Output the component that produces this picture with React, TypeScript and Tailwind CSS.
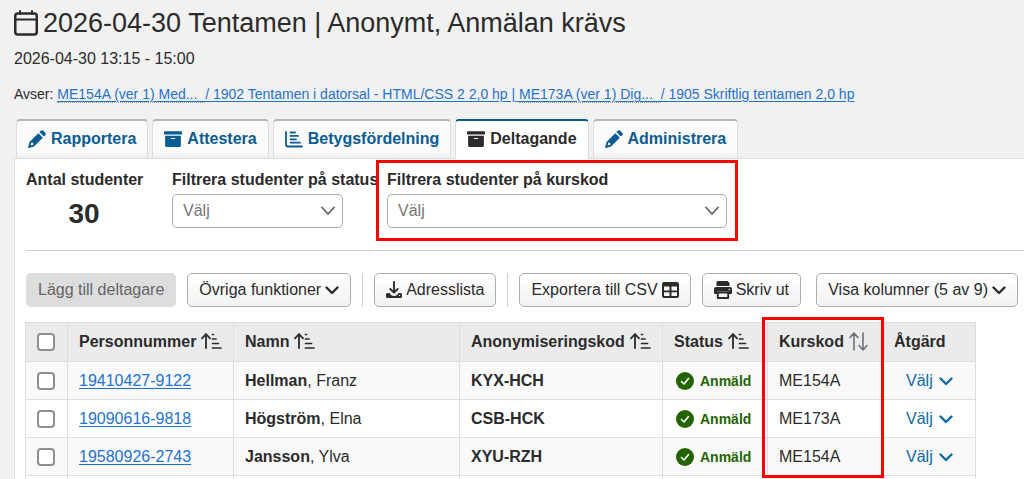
import React from 'react';
import { FaArchive } from 'react-icons/fa';

const iconClass = 'shrink-0';

function CalendarIcon() {
  return (
    <svg className={iconClass} width="25" height="27" viewBox="0 0 25 27" fill="none" stroke="currentColor" strokeWidth="2.5" strokeLinecap="round" aria-hidden="true">
      <rect x="1.250" y="3.500" width="21.500" height="21" rx="2.500" />
      <path strokeWidth="2" d="M2 9.500H22M6 1V4M18 1V4" />
    </svg>
  );
}

function PencilIcon() {
  return (
    <svg className={iconClass} width="18" height="18" viewBox="0 0 18 18" fill="currentColor" aria-hidden="true">
      <path fillRule="evenodd" d="M10.300 3.200L14.800 7.700L6.500 16Q6 16.500 5.300 16.700L1 18Q0 18.200 0.200 17L1.300 12.700Q1.500 12 2 11.500ZM3.300 12.800L2.600 15.400L5.200 14.700V12.800Z" />
      <path d="M11.400 2.100L12.700 0.800Q14 -0.400 15.300 0.800L17.200 2.700Q18.400 4 17.200 5.300L15.900 6.600Z" />
    </svg>
  );
}

function ChartIcon() {
  return (
    <svg className={iconClass} width="18" height="17" viewBox="0 0 18 17" fill="none" stroke="currentColor" strokeWidth="1.8" strokeLinecap="round" aria-hidden="true">
      <path d="M1 1V13.500Q1 15.500 3 15.500H17M5.500 1.500H10M5.500 4.900H13M5.500 8.300H11M5.500 11.700H15" />
    </svg>
  );
}

function ChevronIcon({ thin = false }: { thin?: boolean }) {
  return thin ? (
    <svg className="pointer-events-none absolute top-3 right-2" width="14" height="10" viewBox="0 0 14 10" fill="none" stroke="#5f666e" strokeWidth="1.8" strokeLinecap="round" strokeLinejoin="round" aria-hidden="true">
      <path d="M1 1.500L7 8L13 1.500" />
    </svg>
  ) : (
    <svg className={iconClass} width="14" height="10" viewBox="0 0 14 10" fill="none" stroke="currentColor" strokeWidth="2.4" strokeLinecap="round" strokeLinejoin="round" aria-hidden="true">
      <path d="M1.500 2.500L7 8L12.500 2.500" />
    </svg>
  );
}

function DownloadIcon() {
  return (
    <svg className={iconClass} width="16" height="18" viewBox="0 0 16 18" aria-hidden="true">
      <path d="M1.500 12H3.500Q5 15 8 15T12.500 12H14.500Q16 12 16 13.500V15.500Q16 17 14.500 17H1.500Q0 17 0 15.500V13.500Q0 12 1.500 12Z" fill="currentColor" />
      <path d="M8 1V11.500M4.300 8L8 11.700L11.700 8" fill="none" stroke="currentColor" strokeWidth="1.900" strokeLinecap="round" strokeLinejoin="round" />
      <circle cx="13.500" cy="14.500" r="0.700" fill="#f7f7f7" />
    </svg>
  );
}

function GridIcon() {
  return (
    <svg className={iconClass} width="17" height="16" viewBox="0 0 17 16" aria-hidden="true">
      <path fillRule="evenodd" fill="currentColor" d="M2 0H15Q17 0 17 2V14Q17 16 15 16H2Q0 16 0 14V2Q0 0 2 0ZM2 4.500V8.500H7.500V4.500ZM9.500 4.500V8.500H15V4.500ZM2 10.200V14H7.500V10.200ZM9.500 10.200V14H15V10.200Z" />
    </svg>
  );
}

function PrinterIcon() {
  return (
    <svg className={iconClass} width="18" height="18" viewBox="0 0 18 18" aria-hidden="true">
      <path fill="currentColor" d="M4 0H13.500L15.500 2V5H2.500V1.500Q2.500 0 4 0ZM2 6H16Q18 6 18 8V12Q18 13 17 13H15V10.500H3V13H1Q0 13 0 12V8Q0 6 2 6Z" />
      <path fill="none" stroke="currentColor" strokeWidth="1.900" strokeLinejoin="round" d="M3.800 11.500H14.200V17H3.800Z" />
      <circle cx="15.300" cy="8.500" r="0.800" fill="#f7f7f7" />
    </svg>
  );
}

function SortedIcon() {
  return (
    <svg className={iconClass} width="21" height="18" viewBox="0 0 21 18" fill="none" stroke="currentColor" strokeLinecap="round" aria-hidden="true">
      <path strokeWidth="1.800" strokeLinejoin="round" d="M5 15V1.500M1 5.300L5 1L9 5.300" />
      <path strokeWidth="1.700" d="M11.500 1.500H12.500M11.500 6H15M11.500 10.500H17.500M11.500 15H20" />
    </svg>
  );
}

function UnsortedIcon() {
  return (
    <svg className="shrink-0 text-[#6b7178]" width="19" height="21" viewBox="0 0 19 21" fill="none" stroke="currentColor" strokeWidth="1.600" strokeLinecap="round" strokeLinejoin="round" aria-hidden="true">
      <path d="M5 18V1.500M1 5.500L5 1L9 5.500M14 1V17.500M10 13.500L14 18L18 13.500" />
    </svg>
  );
}

function CheckIcon() {
  return (
    <svg className={iconClass} width="18" height="18" viewBox="0 0 18 18" aria-hidden="true">
      <circle cx="9" cy="9" r="9" fill="#246400" />
      <path d="M5.500 9.500L8 12L12.500 6.500" fill="none" stroke="#fff" strokeWidth="1.600" strokeLinecap="round" strokeLinejoin="round" />
    </svg>
  );
}

const tabs = [
  { label: 'Rapportera', icon: <PencilIcon /> },
  { label: 'Attestera', icon: <FaArchive size={18} /> },
  { label: 'Betygsfördelning', icon: <ChartIcon /> },
  { label: 'Deltagande', icon: <FaArchive size={18} />, active: true },
  { label: 'Administrera', icon: <PencilIcon /> },
];

const students = [
  { id: '19410427-9122', last: 'Hellman', first: 'Franz', code: 'KYX-HCH', course: 'ME154A' },
  { id: '19090616-9818', last: 'Högström', first: 'Elna', code: 'CSB-HCK', course: 'ME173A' },
  { id: '19580926-2743', last: 'Jansson', first: 'Ylva', code: 'XYU-RZH', course: 'ME154A' },
];

const button =
  'flex h-[34px] shrink-0 items-center gap-1 whitespace-nowrap rounded-[5px] border border-[#adadad] bg-linear-to-b from-white to-[#f2f2f2] px-[11px]';
const cell = 'border border-[#dedede] pr-3 pl-[11px] text-left whitespace-nowrap';
const checkbox = 'block size-[18px] appearance-none rounded-[4px] border-2 border-[#8f8f8f] bg-white checked:bg-[#0a5c94]';

function Filter({ id, label, width }: { id: string; label: string; width: string }) {
  return (
    <div>
      <label htmlFor={id} className="block h-6 whitespace-nowrap leading-6 font-bold">{label}</label>
      <div className={`relative mt-0.5 ${width}`}>
        <select id={id} className="block h-[34px] w-full appearance-none rounded-[5px] border border-[#ababab] bg-white px-[10px] text-[#757575]">
          <option>Välj</option>
        </select>
        <ChevronIcon thin />
      </div>
    </div>
  );
}

function Header({ children, icon }: { children: React.ReactNode; icon?: React.ReactNode }) {
  return (
    <span className="flex items-center gap-[5px]">
      {children}
      {icon}
    </span>
  );
}

export default function App() {
  return (
    <div className="flex h-screen flex-col overflow-hidden bg-[#f1f1f1] pl-3.5 font-['Liberation_Sans',Arial,sans-serif] text-base text-[#2b2b2b]">
      <h1 className="mt-[5px] flex h-9 items-center gap-1 whitespace-nowrap text-[27px]">
        <CalendarIcon />
        2026-04-30 Tentamen | Anonymt, Anmälan krävs
      </h1>
      <p className="mt-1.5 h-6 leading-6">2026-04-30 13:15 - 15:00</p>
      <p className="mt-[11px] h-6 whitespace-nowrap text-sm leading-6">
        Avser:{' '}
        <a href="#kurs" className="text-[#1f72cf] underline underline-offset-2">
          <span className="border-b border-dotted border-[#999]">ME154A (ver 1) Med...&nbsp; </span>
          / 1902 Tentamen i datorsal - HTML/CSS 2 2,0 hp | <span className="border-b border-dotted border-[#999]">ME173A (ver 1) Dig...&nbsp; </span>
          / 1905 Skriftlig tentamen 2,0 hp
        </a>
      </p>

      <nav className="mt-[13px] ml-0.5 flex gap-1">
        {tabs.map((tab) => (
          <a
            key={tab.label}
            href={`#${tab.label.toLowerCase()}`}
            className={
              tab.active
                ? 'relative z-10 -mb-px flex h-10 items-center gap-[5px] rounded-t-[4px] border border-b-0 border-t-2 border-[#dedede] border-t-[#0a5c94] bg-white px-[11px] pb-0.5 font-bold'
                : 'flex h-[39px] items-center gap-[5px] rounded-t-[4px] border border-b-0 border-t-2 border-[#dedede] border-t-[#b5b5b5] bg-linear-to-b from-[#fbfbfb] from-80% to-[#f0f0f0] px-[11px] pb-px font-bold text-[#0a5c94]'
            }
          >
            {tab.icon}
            {tab.label}
          </a>
        ))}
      </nav>

      <main className="grow border-t border-l border-[#dedede] bg-white pl-[11px]">
        <section className="flex h-[92px] border-b border-[#cfcfcf] pt-[9px]">
          <div className="w-[146px] shrink-0 pr-[30px] text-center">
            <div className="h-6 whitespace-nowrap leading-6 font-bold">Antal studenter</div>
            <div className="text-[28px] leading-[44px] font-bold">30</div>
          </div>
          <div className="w-[204px] shrink-0">
            <Filter id="status" label="Filtrera studenter på status" width="w-[171px]" />
          </div>
          <div className="relative ml-[11px]">
            <Filter id="kurskod" label="Filtrera studenter på kurskod" width="w-[340px]" />
            <div className="pointer-events-none absolute -top-2 -right-[11px] -left-[11px] h-[81px] border-3 border-[#ff0000]" />
          </div>
        </section>

        <div className="mt-[22px] flex items-center gap-[11px] pr-1.5">
          <button disabled className="h-[34px] shrink-0 rounded-[5px] bg-[#dddddd] px-3 whitespace-nowrap text-[#666]">Lägg till deltagare</button>
          <button className={button}>Övriga funktioner <ChevronIcon /></button>
          <span className="h-[34px] w-px bg-[#d0d0d0]" />
          <button className={button}><DownloadIcon />Adresslista</button>
          <span className="h-[34px] w-px bg-[#d0d0d0]" />
          <button className={button}>Exportera till CSV <GridIcon /></button>
          <button className={button}><PrinterIcon />Skriv ut</button>
          <button className={`${button} ml-auto`}>Visa kolumner (5 av 9) <ChevronIcon /></button>
        </div>

        <table className="-ml-px mt-[15px] w-[950px] table-fixed border-collapse">
          <colgroup>
            <col className="w-[42px]" />
            <col className="w-[166px]" />
            <col className="w-[226px]" />
            <col className="w-[203px]" />
            <col className="w-[105px]" />
            <col className="w-[115px]" />
            <col className="w-[93px]" />
          </colgroup>
          <thead>
            <tr className="h-[39px] bg-[#ebebeb]">
              <th className={cell}><input type="checkbox" aria-label="Markera alla" className={checkbox} /></th>
              <th className={cell}><Header icon={<SortedIcon />}>Personnummer</Header></th>
              <th className={cell}><Header icon={<SortedIcon />}>Namn</Header></th>
              <th className={cell}><Header icon={<SortedIcon />}>Anonymiseringskod</Header></th>
              <th className={cell}><Header icon={<SortedIcon />}>Status</Header></th>
              <th className={`${cell} relative`}>
                <Header icon={<UnsortedIcon />}>Kurskod</Header>
                <div className="pointer-events-none absolute -top-1.5 -right-0.5 -left-1.5 h-[161px] border-3 border-[#ff0000]" />
              </th>
              <th className={cell}>Åtgärd</th>
            </tr>
          </thead>
          <tbody>
            {students.map((s) => (
              <tr key={s.id} className="h-[38px] odd:bg-[#f9f9f9]">
                <td className={cell}><input type="checkbox" aria-label={s.id} className={checkbox} /></td>
                <td className={cell}><a href={`#${s.id}`} className="text-[#1f72cf] underline underline-offset-2">{s.id}</a></td>
                <td className={cell}><b>{s.last}</b>, {s.first}</td>
                <td className={`${cell} font-bold`}>{s.code}</td>
                <td className={cell}>
                  <span className="ml-0.5 flex items-center gap-1.5 text-sm font-bold text-[#246400]"><CheckIcon />Anmäld</span>
                </td>
                <td className={cell}>{s.course}</td>
                <td className={cell}>
                  <button className="ml-3 flex items-center gap-1.5 text-[#0a6aa8]">Välj <ChevronIcon /></button>
                </td>
              </tr>
            ))}
            <tr className="h-[38px]">
              {[0, 1, 2, 3, 4, 5, 6].map((i) => <td key={i} className={cell} />)}
            </tr>
          </tbody>
        </table>
      </main>
    </div>
  );
}
